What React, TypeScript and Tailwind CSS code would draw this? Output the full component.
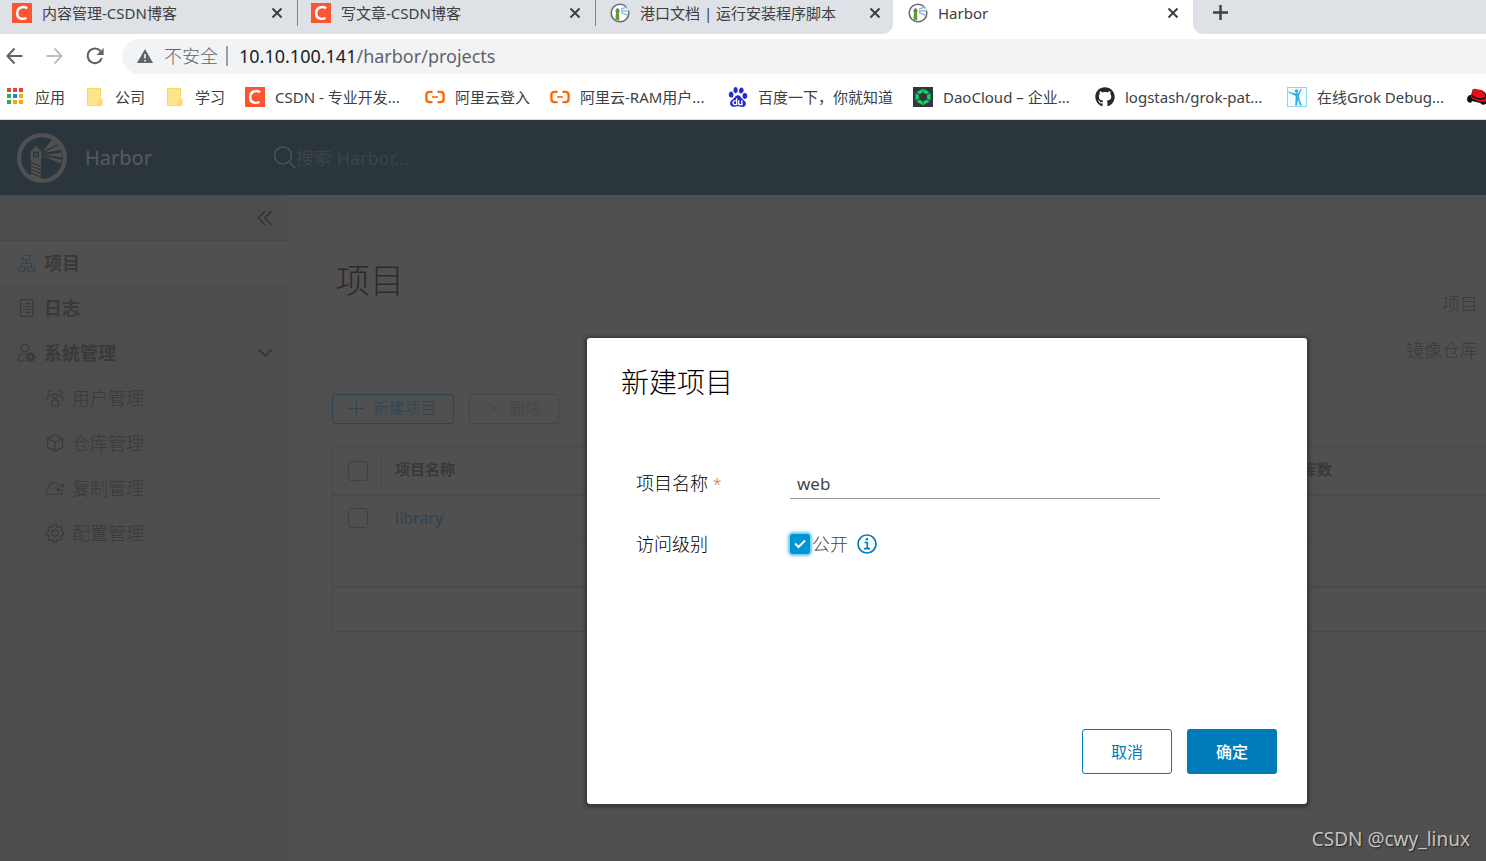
import type { ReactNode } from "react";
import { SiBaidu } from "react-icons/si";
import { FaGithub, FaRedhat } from "react-icons/fa";

function CsdnIcon() {
  return (
    <svg width="20" height="20" viewBox="0 0 20 20" className="shrink-0">
      <rect width="20" height="20" fill="#fc5531" />
      <path d="M15.2 5.2C11.5 3 5.2 3.8 5.2 10.4c0 5.6 5.3 6.4 9.3 4.6" fill="none" stroke="#fff" strokeWidth="2.4" />
    </svg>
  );
}

function HarborFavicon() {
  return (
    <svg width="20" height="20" viewBox="0 0 20 20" className="shrink-0">
      <circle cx="10" cy="10" r="8.8" fill="#fff" stroke="#6b6b6b" strokeWidth="1.6" />
      <path d="M17 2.5l3 5h-3z" fill="#dee1e6" />
      <path d="M5.5 7L7.5 4.8 9.5 7v2h-4z" fill="#777" />
      <path d="M6 9h3l.4 8.400-4-.8z" fill="#5aa02c" />
      <path d="M11 6.500l6-3M11 8.300l6-.6M11 9.600l6 2.400" stroke="#8fbbdc" strokeWidth="1.4" />
    </svg>
  );
}

function HarborLogo() {
  return (
    <svg width="50" height="50" viewBox="0 0 50 50" className="shrink-0">
      <circle cx="25" cy="25" r="22.9" fill="none" stroke="#505050" strokeWidth="4.2" />
      <g fill="#505050">
        <path d="M13.500 18.500L19 13l5.500 5.500V26H24v20.500H14V26h-.5z" />
        <path d="M25.500 18.500L35 6.500l6 4.500zM26 20L41.500 12l2.500 5zM26.500 21.500L45 20v4.500zM25.500 22.500L45 27l-1.500 3.500z" />
      </g>
      <path d="M16 18.500h6v6h-6z" fill="#2b363c" />
      <path d="M17.500 20h3v4.500h-3z" fill="#505050" />
      <path d="M18.500 21.500h1v3h-1z" fill="#2b363c" />
      <path d="M14 29.500l10 4M14 33l10 4M14 36.500l10 4M14 40l10 4" stroke="#2b363c" strokeWidth="1.300" />
    </svg>
  );
}

function AppsIcon() {
  const colors = ["#ea4335", "#ea4335", "#ea4335", "#34a853", "#1e88e5", "#fbab00", "#34a853", "#fbab00", "#fbab00"];
  return (
    <svg width="20" height="20" viewBox="0 0 20 20" className="shrink-0">
      {colors.map((color, i) => (
        <rect key={i} x={2 + (i % 3) * 6} y={1 + Math.floor(i / 3) * 6} width="4" height="4" fill={color} />
      ))}
    </svg>
  );
}

function FolderIcon() {
  return (
    <svg width="20" height="20" viewBox="0 0 20 20" className="shrink-0">
      <path d="M2.5 1.5h13v17h-13z" fill="#ffe48f" stroke="#fbd75b" />
      <path d="M15 12h2.5v6.5H13V15z" fill="#fbd96a" />
    </svg>
  );
}

function AliyunIcon() {
  return (
    <svg width="20" height="20" viewBox="0 0 20 20" className="shrink-0" fill="none" stroke="#ff6a00">
      <path d="M7.5 4.9H4.6C2.4 4.9 1.4 6 1.4 8v4c0 2 1 3.1 3.2 3.1h2.9M12.5 4.9h2.9c2.2 0 3.2 1.1 3.2 3.1v4c0 2-1 3.1-3.2 3.1h-2.9" strokeWidth="2.4" />
      <path d="M7 10h6" strokeWidth="1.6" />
    </svg>
  );
}

function DaoCloudIcon() {
  return (
    <svg width="20" height="20" viewBox="0 0 20 20" className="shrink-0">
      <rect width="20" height="20" fill="#33373f" />
      <g fill="#10d65b">
        <path d="M9.700 1.800v3.700L6.500 7.200 3.500 5.300zM10.300 1.800v3.700l3.200 1.700 3-1.900zM2.500 6L6 8.200v3.300l-3.500 2zM17.500 6L14 8.200v3.300l3.500 2zM3.500 14.500l3-2 3.200 2v3.700zM16.500 14.500l-3-2-3.200 2v3.700z" />
      </g>
    </svg>
  );
}

function GrokIcon() {
  return (
    <svg width="20" height="20" viewBox="0 0 20 20" className="shrink-0">
      <rect x=".5" y=".5" width="19" height="19" fill="#f4fcff" stroke="#8ed5f7" />
      <circle cx="9.500" cy="4" r="1.700" fill="#2ca7df" />
      <path d="M1 4.500l6.500 1.800 3.500-.3 3-4.500.8.400-2.800 6 .5 4.600 2.500 6h-2L11 12.800 10 18.500H8.200L8.700 9 1.500 5.500z" fill="#35aee6" />
    </svg>
  );
}

const bookmarks: { label: string; width: string; icon: ReactNode }[] = [
  { label: "应用", width: "w-20", icon: <AppsIcon /> },
  { label: "公司", width: "w-20", icon: <FolderIcon /> },
  { label: "学习", width: "w-20", icon: <FolderIcon /> },
  { label: "CSDN - 专业开发...", width: "w-[180px]", icon: <CsdnIcon /> },
  { label: "阿里云登入", width: "w-[125px]", icon: <AliyunIcon /> },
  { label: "阿里云-RAM用户...", width: "w-[178px]", icon: <AliyunIcon /> },
  { label: "百度一下，你就知道", width: "w-[185px]", icon: <SiBaidu size={20} color="#2529d8" className="shrink-0" /> },
  { label: "DaoCloud – 企业...", width: "w-[182px]", icon: <DaoCloudIcon /> },
  { label: "logstash/grok-pat...", width: "w-48", icon: <FaGithub size={20} color="#24292e" className="shrink-0" /> },
  { label: "在线Grok Debug...", width: "w-[180px]", icon: <GrokIcon /> },
];

function CloseIcon() {
  return (
    <svg width="12" height="12" viewBox="0 0 12 12" stroke="#3c4043" strokeWidth="2">
      <path d="M1.500 1.500l9 9M10.500 1.500l-9 9" />
    </svg>
  );
}

function TabLabel({ icon, title }: { icon: ReactNode; title: string }) {
  return (
    <>
      {icon}
      <span className="ml-[10px] flex-1 whitespace-nowrap">{title}</span>
      <button aria-label={`关闭 ${title}`}>
        <CloseIcon />
      </button>
    </>
  );
}

function BrowserChrome() {
  return (
    <header className="bg-white text-[15px] leading-5 text-[#3c4043]">
      <div className="flex h-[34px]">
        <div className="flex w-[893px] shrink-0 rounded-br-[10px] bg-[#dee1e6]">
          <div className="flex h-[26px] w-[298px] items-center border-r border-[#80868b] pr-[14px] pl-3">
            <TabLabel icon={<CsdnIcon />} title="内容管理-CSDN博客" />
          </div>
          <div className="flex h-[26px] w-[298px] items-center border-r border-[#80868b] pr-[14px] pl-[13px]">
            <TabLabel icon={<CsdnIcon />} title="写文章-CSDN博客" />
          </div>
          <div className="flex h-[26px] flex-1 items-center pr-3 pl-[14px]">
            <TabLabel icon={<HarborFavicon />} title="港口文档 | 运行安装程序脚本" />
          </div>
        </div>
        <div className="flex h-[26px] w-[300px] shrink-0 items-center pr-[14px] pl-[15px]">
          <TabLabel icon={<HarborFavicon />} title="Harbor" />
        </div>
        <div className="flex flex-1 items-start rounded-bl-[10px] bg-[#dee1e6] pt-[5px] pl-5">
          <button aria-label="新标签页">
            <svg width="15" height="15" viewBox="0 0 15 15" stroke="#3c4043" strokeWidth="2.4">
              <path d="M7.500 0v15M0 7.500h15" />
            </svg>
          </button>
        </div>
      </div>

      <div className="flex h-[41px] items-center pt-[3px] pl-[5px]">
        <button aria-label="后退" className="mr-5">
          <svg width="20" height="20" viewBox="0 0 20 20" fill="none" stroke="#5f6368" strokeWidth="2">
            <path d="M17.500 10H3M9.500 2.500L2.500 10l7 7.500" />
          </svg>
        </button>
        <button aria-label="前进" className="mr-5">
          <svg width="20" height="20" viewBox="0 0 20 20" fill="none" stroke="#bcbec1" strokeWidth="2">
            <path d="M1.500 10H16M9.500 2.500l7 7.500-7 7.500" />
          </svg>
        </button>
        <button aria-label="刷新" className="mr-[17px]">
          <svg width="20" height="20" viewBox="0 0 20 20" fill="none" stroke="#5f6368" strokeWidth="2.100">
            <path d="M16.800 12.200A7.300 7.300 0 1 1 15.600 5.200" />
            <path d="M18.600 2v7h-7z" fill="#5f6368" stroke="none" />
          </svg>
        </button>
        <div className="flex h-[35px] flex-1 items-center rounded-l-full bg-[#f1f3f4] pl-[15px] text-lg">
          <svg width="16" height="16" viewBox="0 0 16 16">
            <path d="M8 1l8 14H0z" fill="#5f6368" />
            <path d="M8 6v4.500M8 12v1.600" stroke="#f1f3f4" strokeWidth="1.600" />
          </svg>
          <span className="mr-2 ml-[11px] font-light whitespace-nowrap text-[#5f6368]">不安全</span>
          <span className="mr-[11px] h-5 w-0.5 bg-[#9aa0a6]" />
          <span className="whitespace-nowrap text-[#202124]">
            10.10.100.141<span className="text-[#5f6368]">/harbor/projects</span>
          </span>
        </div>
      </div>

      <nav className="flex h-[45px] items-center overflow-hidden border-b border-[#dadce0] pl-[5px]">
        {bookmarks.map((b) => (
          <a key={b.label} href="#" className={`flex shrink-0 items-center gap-[10px] whitespace-nowrap ${b.width}`}>
            {b.icon}
            {b.label}
          </a>
        ))}
        <a href="#" aria-label="Red Hat" className="shrink-0">
          <svg width="22" height="20" viewBox="0 0 22 20">
            <path d="M0 13C0 9 2 8 4 8l2-6 12 3 2 5c2 1 2 4 1 6l-5 2-3-2-8-2-1 2-3-1z" fill="#111" />
            <path d="M5.500 3.500C6.500 1 9 1.500 11 2.500c2-.5 6 .5 6.500 3.500l1 4.500c2 1 2 3.500-.5 4-5 1-14-2-14-5 0-1 .5-1.500 1-1.500z" fill="#e3101c" />
            <path d="M5 8.500c3 3.500 9 4.500 13 2.500" fill="none" stroke="#111" strokeWidth="1.500" />
          </svg>
        </a>
      </nav>
    </header>
  );
}

function AppHeader() {
  return (
    <div className="flex h-[75px] items-center bg-[#2b363c] pl-[17px]">
      <a href="#" className="flex h-[50px] w-[226px] items-center gap-[18px] border-r border-[#303b41] text-xl text-[#5a5b5b]">
        <HarborLogo />
        Harbor
      </a>
      <label className="ml-[30px] flex flex-1 items-center">
        <svg width="23" height="23" viewBox="0 0 23 23" fill="none" stroke="#4c5356" strokeWidth="1.500">
          <circle cx="10" cy="9.500" r="8.500" />
          <path d="M16.500 16l5.500 6" />
        </svg>
        <input
          type="search"
          aria-label="搜索"
          placeholder="搜索 Harbor..."
          className="w-60 bg-transparent text-lg outline-none placeholder:text-[#3a444a]"
        />
      </label>
    </div>
  );
}

const subItems: { label: string; icon: ReactNode }[] = [
  {
    label: "用户管理",
    icon: (
      <>
        <circle cx="10" cy="8" r="2.300" />
        <path d="M6.500 18v-4c0-1.400 1.200-2.200 3.500-2.200s3.500.8 3.500 2.200v4zM6.200 6.800a2.300 2.300 0 1 1 1-3.600M13.800 6.800a2.300 2.300 0 1 0-1-3.600M2 13v-2.500c0-1.300 1-2.200 3-2.200M18 13v-2.500c0-1.300-1-2.200-3-2.200" />
      </>
    ),
  },
  { label: "仓库管理", icon: <path d="M10 2l7.500 3.800v8.600L10 18l-7.500-3.600V5.800zM2.500 5.800L10 9.400l7.500-3.600M10 9.400V18" /> },
  {
    label: "复制管理",
    icon: (
      <path d="M17.500 14c-.4 1.600-1.500 2.500-3.500 2.500H4.500C2.300 16.500 1 15 1 13.200c0-1.900 1.300-3 3-3.200.2-3.400 2.500-5.500 5.300-5.500 2 0 3.600.9 4.500 2.500M13 7.500h6M16.800 5.500l2.200 2-2.200 2M18.500 12H12M14 10l-2.200 2 2.200 2" />
    ),
  },
  {
    label: "配置管理",
    icon: (
      <>
        <circle cx="10" cy="10" r="3.200" />
        <path d="M8.600 1.500h2.800l.5 2.200 1.400.6 2-1.200 2 2-1.200 2 .6 1.400 2.100.5v2.600l-2.100.6-.6 1.400 1.200 2-2 2-2-1.200-1.400.6-.5 2.100H8.600l-.5-2.100-1.400-.6-2 1.200-2-2 1.200-2-.6-1.400-2.100-.6V9l2.100-.5.6-1.400-1.200-2 2-2 2 1.200 1.400-.6z" />
      </>
    ),
  },
];

function Sidebar() {
  return (
    <aside className="w-[287px] shrink-0 bg-[#4d4d4d] text-lg text-[#393939]">
      <div className="flex h-[46px] items-center justify-end border-b border-[#484848] pr-[14px]">
        <button aria-label="收起">
          <svg width="16" height="16" viewBox="0 0 16 16" fill="none" stroke="#313131" strokeWidth="1.400">
            <path d="M8 1L1.500 8 8 15M14.500 1L8 8l6.500 7" />
          </svg>
        </button>
      </div>
      <nav>
        <a href="#" className="flex h-[45px] items-center gap-2 bg-[#505050] pb-px pl-[17px] font-bold">
          <svg width="19" height="20" viewBox="0 0 19 20" fill="none" stroke="#2c4453" strokeWidth="1.200">
            <path d="M6 2.500h7v4.500H6zM1.500 14h6.500v4H1.500zM11 14h6.500v4H11zM9.500 7v3.500M4.500 14v-3.500h10V14" />
          </svg>
          项目
        </a>
        <a href="#" className="flex h-[45px] items-center gap-2 pb-px pl-[17px] font-bold">
          <svg width="19" height="20" viewBox="0 0 19 20" fill="none" stroke="#393939" strokeWidth="1.200">
            <rect x="3.500" y="1.500" width="12.500" height="17" rx="1" />
            <path d="M6 5.500h1M8.500 5.500h5.500M6 8.500h1M8.500 8.500h5.500M6 11.500h1M8.500 11.500h5.500M6 14.500h1M8.500 14.500h5.500" />
          </svg>
          日志
        </a>
        <button className="flex h-[45px] w-full items-center gap-2 pr-[14px] pb-px pl-[17px] font-bold">
          <svg width="19" height="20" viewBox="0 0 19 20" fill="none" stroke="#393939" strokeWidth="1.200">
            <circle cx="8" cy="5" r="3.700" />
            <path d="M9 18H1.500v-3c0-3 2.500-4.500 6-4.500h1.500" />
            <circle cx="13.500" cy="14" r="3" strokeWidth="2.400" />
            <path d="M13.500 9v2M13.500 17v2.200M8.500 14h2M16.700 14h2M10 10.500l1.300 1.300M17 10.500l-1.300 1.300M10 17.500l1.300-1.300M17 17.500l-1.300-1.300" strokeWidth="1.800" />
          </svg>
          系统管理
          <svg width="16" height="16" viewBox="0 0 16 16" fill="none" stroke="#343434" strokeWidth="1.800" className="ml-auto">
            <path d="M2 4.500l6.200 6.500 6.200-6.500" />
          </svg>
        </button>
        {subItems.map((item) => (
          <a key={item.label} href="#" className="flex h-[45px] items-center gap-[7px] pb-px pl-[45px] font-light">
            <svg width="20" height="20" viewBox="0 0 20 20" fill="none" stroke="#3a3a3a" strokeWidth="1.200">
              {item.icon}
            </svg>
            {item.label}
          </a>
        ))}
      </nav>
    </aside>
  );
}

const boxClass = "block size-5 appearance-none rounded-[3px] border border-[#404040]";

function ProjectsPage() {
  return (
    <main className="min-w-0 flex-1 pt-[60px] pl-[45px] text-[#393939]">
      <h1 className="pl-1 text-[34px] leading-[50px] font-light text-[#2b2b2b]">项目</h1>
      <div className="-mt-[13px] flex flex-col items-end gap-[22px] pr-2 text-lg leading-6 font-light">
        <span>项目</span>
        <span>镜像仓库</span>
      </div>

      <div className="mt-8 flex gap-[15px] text-base font-light">
        <button className="flex h-[30px] w-[122px] items-center justify-center gap-2 rounded-[3px] border border-[#2c4453] pb-0.5 text-[#2c4453]">
          <svg width="15" height="15" viewBox="0 0 15 15" stroke="#2f4350">
            <path d="M7.500 0v15M0 7.500h15" />
          </svg>
          新建项目
        </button>
        <button disabled className="flex h-[30px] w-[90px] items-center justify-center gap-2 rounded-[3px] border border-[#464646] pb-0.5 text-[#434343]">
          <svg width="15" height="15" viewBox="0 0 15 15" stroke="#444">
            <path d="M2 2l11 11M13 2L2 13" />
          </svg>
          删除
        </button>
      </div>

      <div className="mt-[22px] rounded-l-[3px] border border-r-0 border-[#494949]">
        <table className="w-full table-fixed border-collapse text-left">
          <thead>
            <tr className="h-12 border-b-2 border-[#494949] text-[15px]">
              <th className="w-[49px] pl-[15px]">
                <div className="flex h-8 items-center border-r border-[#494949]">
                  <input type="checkbox" aria-label="全选" className={boxClass} />
                </div>
              </th>
              <th className="pb-0.5 pl-[13px] font-bold">项目名称</th>
              <th className="w-[242px] pb-0.5 pl-[13px] font-bold">镜像仓库数</th>
            </tr>
          </thead>
          <tbody>
            <tr className="h-[46px] border-b border-[#4b4b4b]">
              <td className="pl-[15px]">
                <input type="checkbox" aria-label="选择 library" className={boxClass} />
              </td>
              <td className="pl-[13px] text-base text-[#2f4350]">
                <a href="#">library</a>
              </td>
              <td />
            </tr>
          </tbody>
        </table>
        <div className="h-[46px] border-b-2 border-[#494949]" />
        <div className="h-[43px]" />
      </div>
    </main>
  );
}

function NewProjectDialog() {
  return (
    <form
      role="dialog"
      aria-labelledby="dialog-title"
      className="flex min-h-[466px] w-[720px] flex-col rounded-[3px] bg-white pt-6 pr-[30px] pb-[30px] pl-[34px] text-lg leading-6 text-black shadow-[0_1px_3px_3px_rgba(40,40,40,0.5)]"
    >
      <h2 id="dialog-title" className="text-[28px] leading-10 font-light">
        新建项目
      </h2>
      <div className="mt-[66px] flex items-center pl-[15px]">
        <label htmlFor="project-name" className="w-[154px] font-light">
          项目名称 <span className="text-base text-[#e0664d]">*</span>
        </label>
        <input
          id="project-name"
          type="text"
          defaultValue="web"
          className="h-[31px] w-[370px] border-b border-[#999] px-[7px] text-[17px] text-[#454545] outline-none"
        />
      </div>
      <div className="mt-[33px] flex items-center pl-[15px]">
        <span className="w-[154px] font-light">访问级别</span>
        <span className="grid">
          <input
            id="project-public"
            type="checkbox"
            defaultChecked
            className="col-start-1 row-start-1 size-5 appearance-none rounded-[3px] bg-[#0095d3] shadow-[0_0_3px_2px_#6cc3e8]"
          />
          <svg width="20" height="20" viewBox="0 0 20 20" fill="none" stroke="#fff" strokeWidth="2" className="pointer-events-none col-start-1 row-start-1">
            <path d="M5 9.500l3.500 3.500L15 6.500" />
          </svg>
        </span>
        <label htmlFor="project-public" className="ml-0.5 font-light text-[#454545]">
          公开
        </label>
        <button type="button" aria-label="说明" className="ml-[9px]">
          <svg width="20" height="20" viewBox="0 0 20 20" fill="none" stroke="#007cbb" strokeWidth="1.700">
            <circle cx="10" cy="10" r="9" />
            <path d="M7.500 8.500h2.800v6M7 14.700h6" />
            <circle cx="10" cy="5.200" r="1.300" fill="#007cbb" stroke="none" />
          </svg>
        </button>
      </div>
      <div className="mt-auto flex justify-end gap-[15px] text-base">
        <button type="button" className="h-[45px] w-[90px] rounded-[3px] border border-[#007cbb] text-[#007cbb]">
          取消
        </button>
        <button type="submit" className="h-[45px] w-[90px] rounded-[3px] bg-[#007cbb] font-medium text-white">
          确定
        </button>
      </div>
    </form>
  );
}

export default function App() {
  return (
    <div className="flex min-h-screen flex-col font-['Noto_Sans','Noto_Sans_CJK_SC',sans-serif]">
      <BrowserChrome />
      <div className="relative flex flex-1 flex-col bg-[#505050]">
        <AppHeader />
        <div className="flex flex-1">
          <Sidebar />
          <ProjectsPage />
        </div>
        <div className="absolute inset-0 flex items-start justify-end pt-[218px] pr-[179px]">
          <NewProjectDialog />
        </div>
        <span className="absolute right-4 bottom-2 text-[19px] leading-7 text-[#c4c4c4] [text-shadow:1px_1px_1px_#222]">
          CSDN @cwy_linux
        </span>
      </div>
    </div>
  );
}
